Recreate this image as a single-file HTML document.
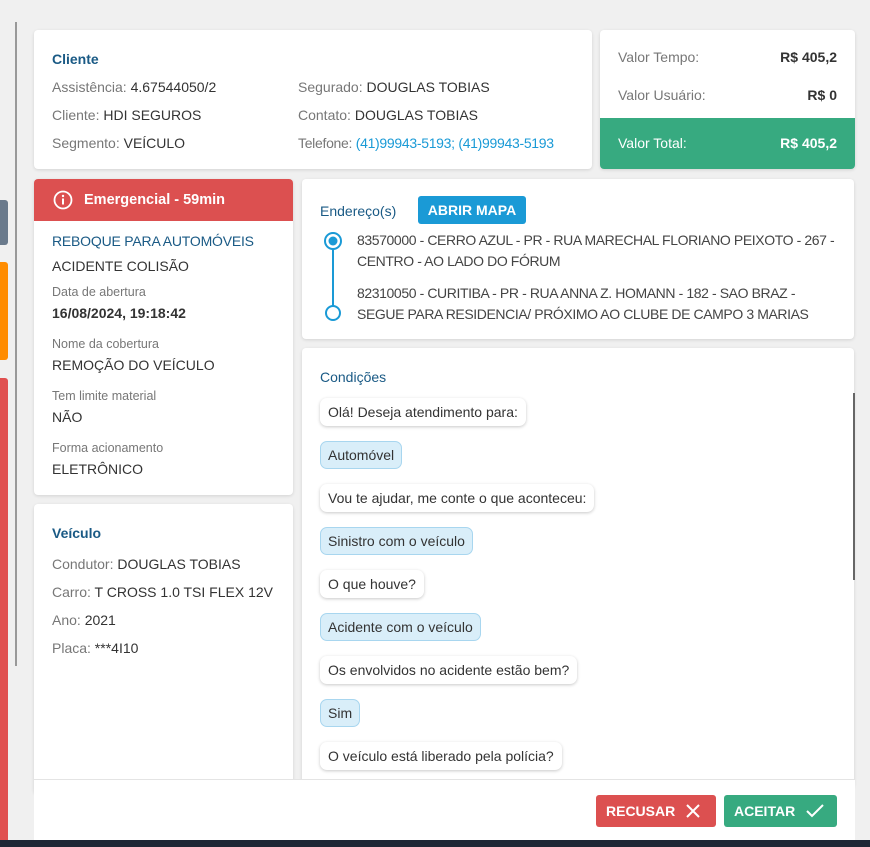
<!DOCTYPE html>
<html><head><meta charset="utf-8"><style>
*{box-sizing:border-box;margin:0;padding:0}
body{width:870px;height:847px;background:#f0f0f0;font-family:"Liberation Sans",sans-serif;font-size:14px;color:#333;position:relative;overflow:hidden}
.a{position:absolute;white-space:nowrap}
.card{position:absolute;background:#fff;border-radius:4px;box-shadow:0 1px 3px rgba(0,0,0,.12)}
.t{color:#1a5a85;font-size:14px;font-weight:bold}
.l{color:#777}
.lbl{color:#777;font-size:12.5px}
.val{font-weight:bold;color:#333}
.b{position:absolute;left:18px;padding:6px 8px;border-radius:7px;background:#fff;box-shadow:0 1px 3px rgba(0,0,0,.22);white-space:nowrap;font-size:14px;color:#333}
.u{background:#d9eef9;border:1px solid #a8d6ef;box-shadow:none;padding:5px 7px}
.btn{position:absolute;top:795px;height:32px;border-radius:3px;color:#fff;font-weight:bold;font-size:14px;line-height:32px;padding-left:10px}
</style></head><body>
<div class="a" style="left:15px;top:22px;width:2px;height:644px;background:#999"></div>
<div class="a" style="left:0;top:200px;width:8px;height:45px;background:#6a7a8c;border-radius:0 3px 3px 0"></div>
<div class="a" style="left:0;top:262px;width:8px;height:98px;background:#ff8c00;border-radius:0 3px 3px 0"></div>
<div class="a" style="left:0;top:378px;width:8px;height:469px;background:#e05050;border-radius:0 3px 0 0"></div>

<div class="card" style="left:34px;top:30px;width:558px;height:139px">
<div class="a t" style="left:18px;top:21px">Cliente</div>
<div class="a" style="left:18px;top:49px"><span class="l">Assistência:</span> 4.67544050/2</div>
<div class="a" style="left:18px;top:77px"><span class="l">Cliente:</span> HDI SEGUROS</div>
<div class="a" style="left:18px;top:105px"><span class="l">Segmento:</span> VEÍCULO</div>
<div class="a" style="left:264px;top:49px"><span class="l">Segurado:</span> DOUGLAS TOBIAS</div>
<div class="a" style="left:264px;top:77px"><span class="l">Contato:</span> DOUGLAS TOBIAS</div>
<div class="a" style="left:264px;top:105px;letter-spacing:-0.3px"><span class="l">Telefone:</span> <span style="color:#1a9ad6">(41)99943-5193; (41)99943-5193</span></div>
</div>

<div class="card" style="left:600px;top:30px;width:255px;height:139px;overflow:hidden">
<div class="a l" style="left:18px;top:19px">Valor Tempo:</div><div class="a val" style="right:18px;top:19px">R$ 405,2</div>
<div class="a l" style="left:18px;top:57px">Valor Usuário:</div><div class="a val" style="right:18px;top:57px">R$ 0</div>
<div class="a" style="left:0;top:88px;width:255px;height:51px;background:#37aa80;color:#fff">
<div class="a" style="left:18px;top:17px">Valor Total:</div><div class="a" style="right:18px;top:17px;font-weight:bold">R$ 405,2</div></div>
</div>

<div class="card" style="left:34px;top:179px;width:259px;height:316px;overflow:hidden">
<div class="a" style="left:0;top:0;width:259px;height:42px;background:#dc5050;color:#fff;font-weight:bold;font-size:14.5px">
<svg class="a" style="left:19px;top:11px" width="20" height="20" viewBox="0 0 20 20"><circle cx="10" cy="10" r="8.5" fill="none" stroke="#fff" stroke-width="1.8"/><rect x="9" y="8.5" width="2" height="6" fill="#fff"/><circle cx="10" cy="6" r="1.2" fill="#fff"/></svg>
<div class="a" style="left:50px;top:13px">Emergencial - 59min</div></div>
<div class="a t" style="left:18px;top:54px;font-weight:normal;letter-spacing:-0.2px">REBOQUE PARA AUTOMÓVEIS</div>
<div class="a" style="left:18px;top:79px">ACIDENTE COLISÃO</div>
<div class="a lbl" style="left:18px;top:106px">Data de abertura</div>
<div class="a val" style="left:18px;top:126px">16/08/2024, 19:18:42</div>
<div class="a lbl" style="left:18px;top:158px">Nome da cobertura</div>
<div class="a" style="left:18px;top:178px">REMOÇÃO DO VEÍCULO</div>
<div class="a lbl" style="left:18px;top:210px">Tem limite material</div>
<div class="a" style="left:18px;top:230px">NÃO</div>
<div class="a lbl" style="left:18px;top:262px">Forma acionamento</div>
<div class="a" style="left:18px;top:282px">ELETRÔNICO</div>
</div>

<div class="card" style="left:34px;top:504px;width:259px;height:290px">
<div class="a t" style="left:18px;top:21px">Veículo</div>
<div class="a" style="left:18px;top:52px"><span class="l">Condutor:</span> DOUGLAS TOBIAS</div>
<div class="a" style="left:18px;top:80px"><span class="l">Carro:</span> T CROSS 1.0 TSI FLEX 12V</div>
<div class="a" style="left:18px;top:108px"><span class="l">Ano:</span> 2021</div>
<div class="a" style="left:18px;top:136px"><span class="l">Placa:</span> ***4I10</div>
</div>

<div class="card" style="left:302px;top:179px;width:552px;height:160px">
<div class="a t" style="left:18px;top:24px;font-weight:normal">Endereço(s)</div>
<div class="a" style="left:116px;top:17px;width:108px;height:28px;background:#1a9ad6;border-radius:3px;color:#fff;font-weight:bold;font-size:14px;text-align:center;line-height:28px">ABRIR MAPA</div>
<svg class="a" style="left:20px;top:52px" width="22" height="92" viewBox="0 0 22 92"><line x1="11" y1="10" x2="11" y2="80" stroke="#1a9ad6" stroke-width="2"/><circle cx="11" cy="10" r="8" fill="#fff" stroke="#1a9ad6" stroke-width="2"/><circle cx="11" cy="10" r="4.5" fill="#1a9ad6"/><circle cx="11" cy="82" r="7" fill="#fff" stroke="#1a9ad6" stroke-width="2"/></svg>
<div class="a" style="left:55px;top:51px;width:485px;line-height:21px;font-size:14px;color:#444;white-space:normal;letter-spacing:-0.4px">83570000 - CERRO AZUL - PR - RUA MARECHAL FLORIANO PEIXOTO - 267 - CENTRO - AO LADO DO FÓRUM</div>
<div class="a" style="left:55px;top:104px;width:470px;line-height:21px;font-size:14px;color:#444;white-space:normal;letter-spacing:-0.4px">82310050 - CURITIBA - PR - RUA ANNA Z. HOMANN - 182 - SAO BRAZ - SEGUE PARA RESIDENCIA/ PRÓXIMO AO CLUBE DE CAMPO 3 MARIAS</div>
</div>

<div class="card" style="left:302px;top:348px;width:552px;height:440px">
<div class="a t" style="left:18px;top:21px;font-weight:normal">Condições</div>
<div class="b" style="top:50px">Olá! Deseja atendimento para:</div>
<div class="b u" style="top:93px">Automóvel</div>
<div class="b" style="top:136px">Vou te ajudar, me conte o que aconteceu:</div>
<div class="b u" style="top:179px">Sinistro com o veículo</div>
<div class="b" style="top:222px">O que houve?</div>
<div class="b u" style="top:265px">Acidente com o veículo</div>
<div class="b" style="top:308px">Os envolvidos no acidente estão bem?</div>
<div class="b u" style="top:351px">Sim</div>
<div class="b" style="top:394px">O veículo está liberado pela polícia?</div>
<div class="a" style="left:551px;top:45px;width:2px;height:187px;background:#666"></div>
</div>

<div class="a" style="left:34px;top:779px;width:821px;height:62px;background:#fff;border-top:1px solid #e4e4e4"></div>
<div class="btn" style="left:596px;width:120px;background:#dc5050">RECUSAR<svg class="a" style="left:90px;top:9px" width="14" height="14" viewBox="0 0 14 14"><path d="M1 1L13 13M13 1L1 13" stroke="#fff" stroke-width="2"/></svg></div>
<div class="btn" style="left:724px;width:113px;background:#37aa80">ACEITAR<svg class="a" style="left:82px;top:9px" width="18" height="14" viewBox="0 0 18 14"><path d="M1 7L6 12L17 1" stroke="#fff" stroke-width="2" fill="none"/></svg></div>
<div class="a" style="left:0;top:840px;width:870px;height:7px;background:#1e2735"></div>
</body></html>
